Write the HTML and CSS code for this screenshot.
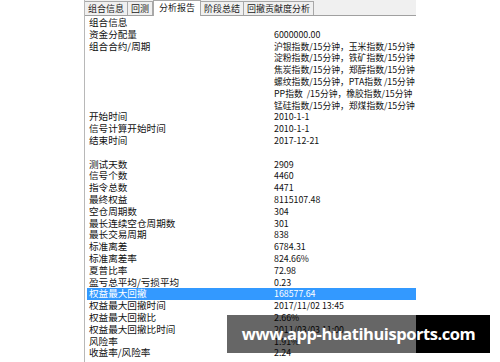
FILE: index.html
```html
<!DOCTYPE html>
<html lang="zh-CN">
<head>
<meta charset="UTF-8">
<meta name="viewport" content="width=device-width, initial-scale=1.0">
<title>分析报告</title>
<link rel="stylesheet" href="styles.css">
</head>
<body>
<div id="panel">
    <div id="tabBar">
        <div class="tab">组合信息</div>
        <div class="tab">回测</div>
        <div class="tab active">分析报告</div>
        <div class="tab">阶段总结</div>
        <div class="tab">回撤贡献度分析</div>
    </div>
    <div id="report">
        <div class="row"><span class="label">组合信息</span><span class="value"></span></div>
        <div class="row"><span class="label">资金分配量</span><span class="value">6000000.00</span></div>
        <div class="row"><span class="label">组合合约/周期</span><span class="value">沪银指数/15分钟，玉米指数/15分钟</span></div>
        <div class="row"><span class="label"></span><span class="value">淀粉指数/15分钟，铁矿指数/15分钟</span></div>
        <div class="row"><span class="label"></span><span class="value">焦炭指数/15分钟，郑醇指数/15分钟</span></div>
        <div class="row"><span class="label"></span><span class="value">螺纹指数/15分钟，PTA指数 /15分钟</span></div>
        <div class="row"><span class="label"></span><span class="value">PP指数  /15分钟，橡胶指数/15分钟</span></div>
        <div class="row"><span class="label"></span><span class="value">锰硅指数/15分钟，郑煤指数/15分钟</span></div>
        <div class="row"><span class="label">开始时间</span><span class="value">2010-1-1</span></div>
        <div class="row"><span class="label">信号计算开始时间</span><span class="value">2010-1-1</span></div>
        <div class="row"><span class="label">结束时间</span><span class="value">2017-12-21</span></div>
        <div class="row"><span class="label"></span><span class="value"></span></div>
        <div class="row"><span class="label">测试天数</span><span class="value">2909</span></div>
        <div class="row"><span class="label">信号个数</span><span class="value">4460</span></div>
        <div class="row"><span class="label">指令总数</span><span class="value">4471</span></div>
        <div class="row"><span class="label">最终权益</span><span class="value">8115107.48</span></div>
        <div class="row"><span class="label">空仓周期数</span><span class="value">304</span></div>
        <div class="row"><span class="label">最长连续空仓周期数</span><span class="value">301</span></div>
        <div class="row"><span class="label">最长交易周期</span><span class="value">838</span></div>
        <div class="row"><span class="label">标准离差</span><span class="value">6784.31</span></div>
        <div class="row"><span class="label">标准离差率</span><span class="value">824.66%</span></div>
        <div class="row"><span class="label">夏普比率</span><span class="value">72.98</span></div>
        <div class="row"><span class="label">盈亏总平均/亏损平均</span><span class="value">0.23</span></div>
        <div class="row selected"><span class="label">权益最大回撤</span><span class="value">168577.64</span></div>
        <div class="row"><span class="label">权益最大回撤时间</span><span class="value">2017/11/02 13:45</span></div>
        <div class="row"><span class="label">权益最大回撤比</span><span class="value">2.66%</span></div>
        <div class="row"><span class="label">权益最大回撤比时间</span><span class="value">2011/03/03 11:00</span></div>
        <div class="row"><span class="label">风险率</span><span class="value">1.91%</span></div>
        <div class="row"><span class="label">收益率/风险率</span><span class="value">2.24</span></div>
    </div>
</div>
<div id="watermark">www.app-huatihuisports.com</div>
</body>
</html>
```

FILE: styles.css
```css
body {
    margin: 0;
    background-color: #fff;
    font-family: "Noto Sans CJK SC", sans-serif;
    color: #111;
    overflow: hidden;
}

#panel {
    margin-left: 84px;
    width: 331px;
    height: 362px;
    border-left: 1px solid #b8b8b8;
    overflow: hidden;
}

#tabBar {
    display: flex;
    align-items: flex-end;
    height: 15px;
    background-color: #f0f0f0;
    border-bottom: 1px solid #a0a0a0;
}

.tab {
    height: 13px;
    line-height: 13px;
    padding: 0 3px;
    font-size: 9px;
    color: #222;
    border: 1px solid #a8a8a8;
    border-bottom: none;
    border-left: none;
    background-color: #f0f0f0;
}

.tab.active {
    height: 15px;
    line-height: 13px;
    padding: 0 5px;
    margin-bottom: -1px;
    background-color: #fff;
    border-left: 1px solid #a8a8a8;
}

#report {
    padding: 1px 0 0 2px;
}

.row {
    display: grid;
    grid-template-columns: 185px 1fr;
    height: 11.8px;
    line-height: 11.8px;
    padding-left: 2px;
    white-space: pre;
}

.label {
    font-size: 9.6px;
}

.value {
    font-size: 8.8px;
}

.row.selected {
    background-color: #3399ff;
    color: #fff;
}

#watermark {
    position: absolute;
    left: 227px;
    top: 315px;
    width: 263px;
    height: 38px;
    line-height: 37px;
    text-align: center;
    white-space: nowrap;
    overflow: hidden;
    /* translucent over the panel, solid past its edge */
    background: linear-gradient(to right, rgba(0, 0, 0, 0.6) 189px, #000 189px);
    color: #fff;
    font-family: "Open Sans", sans-serif;
    font-weight: bold;
    font-size: 16.5px;
    letter-spacing: -0.45px;
}
```
